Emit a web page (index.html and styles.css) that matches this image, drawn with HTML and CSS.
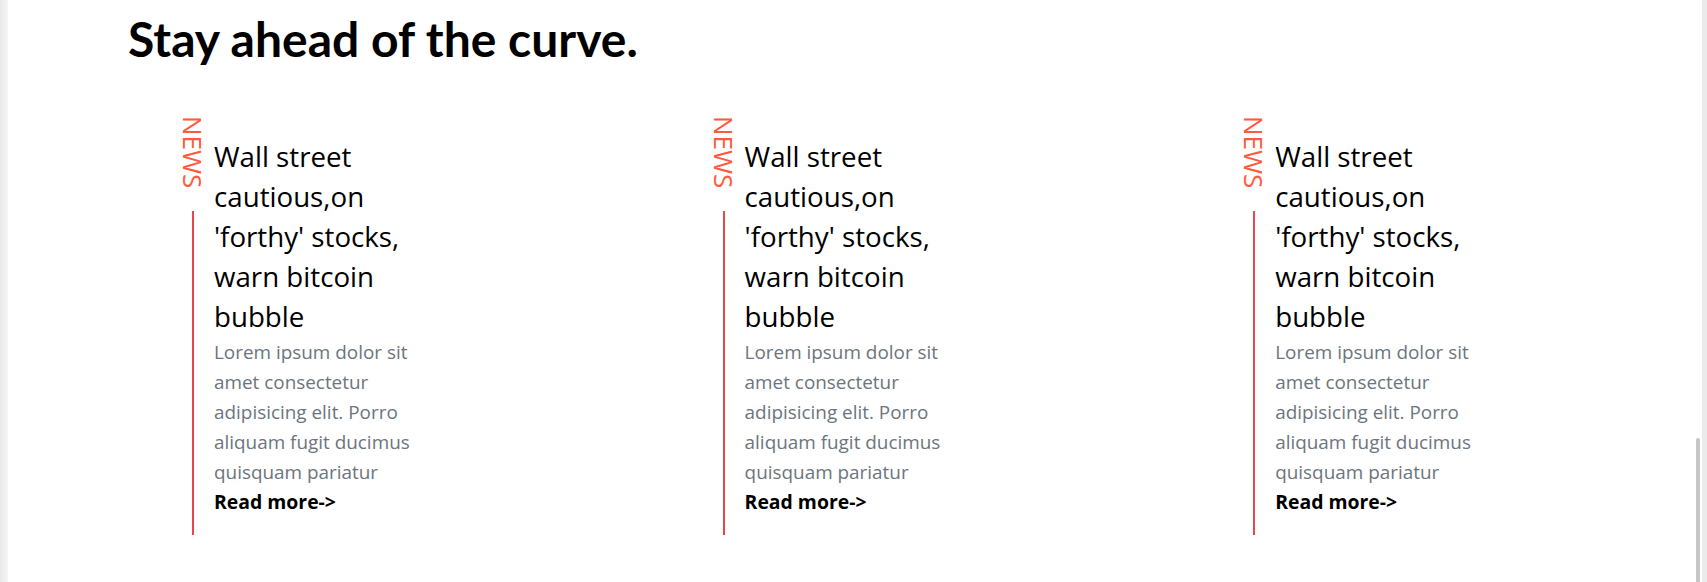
FILE: index.html
```html
<!DOCTYPE html>
<html lang="en">
<head>
<meta charset="utf-8">
<title>Stay ahead of the curve.</title>
<link rel="stylesheet" href="styles.css">
</head>
<body>
<div class="frame-left"></div>
<div class="frame-right"></div>
<div class="scroll-thumb"></div>

<section class="news-section">
  <h2 class="section-title">Stay ahead of the curve.</h2>
  <div class="cards">
    <article class="card">
      <div class="card-side">
        <span class="tag">NEWS</span>
        <span class="rule"></span>
      </div>
      <div class="card-body">
        <h3 class="card-title">Wall street cautious,on 'forthy' stocks, warn bitcoin bubble</h3>
        <p class="card-text">Lorem ipsum dolor sit amet consectetur adipisicing elit. Porro aliquam fugit ducimus quisquam pariatur</p>
        <a class="read-more" href="#">Read more-&gt;</a>
      </div>
    </article>
    <article class="card">
      <div class="card-side">
        <span class="tag">NEWS</span>
        <span class="rule"></span>
      </div>
      <div class="card-body">
        <h3 class="card-title">Wall street cautious,on 'forthy' stocks, warn bitcoin bubble</h3>
        <p class="card-text">Lorem ipsum dolor sit amet consectetur adipisicing elit. Porro aliquam fugit ducimus quisquam pariatur</p>
        <a class="read-more" href="#">Read more-&gt;</a>
      </div>
    </article>
    <article class="card">
      <div class="card-side">
        <span class="tag">NEWS</span>
        <span class="rule"></span>
      </div>
      <div class="card-body">
        <h3 class="card-title">Wall street cautious,on 'forthy' stocks, warn bitcoin bubble</h3>
        <p class="card-text">Lorem ipsum dolor sit amet consectetur adipisicing elit. Porro aliquam fugit ducimus quisquam pariatur</p>
        <a class="read-more" href="#">Read more-&gt;</a>
      </div>
    </article>
  </div>
</section>
</body>
</html>
```
FILE: styles.css
```css
* { box-sizing: border-box; }

html, body {
  margin: 0;
  padding: 0;
  background: #ffffff;
}

body {
  font-family: "Open Sans", "Noto Sans", sans-serif;
  color: #000;
  overflow: hidden;
}

/* window chrome overlays */
.frame-left {
  position: fixed;
  left: 0;
  top: 0;
  bottom: 0;
  width: 8px;
  background: linear-gradient(to right, #e9e9e9, #f6f6f6);
}
.frame-right {
  position: fixed;
  right: 0;
  top: 0;
  bottom: 0;
  width: 5px;
  background: #ebebeb;
}
.scroll-thumb {
  position: fixed;
  left: 1696px;
  top: 438px;
  width: 4px;
  height: 150px;
  background: #c6c6c6;
  border-radius: 2px 2px 0 0;
}

.news-section {
  padding: 10px 0 0 128px;
}

.section-title {
  margin: 0;
  font-family: "Lato", "Open Sans", sans-serif;
  font-weight: 700;
  font-size: 48px;
  line-height: 58px;
  color: #000;
}

.cards {
  display: grid;
  grid-template-columns: repeat(3, 530.6px);
  margin: 48px 0 0 55px;
}

.card {
  display: flex;
  gap: 11px;
}

.card-side {
  width: 20px;
  display: flex;
  flex-direction: column;
  align-items: center;
}

.tag {
  writing-mode: vertical-rl;
  font-size: 26px;
  font-weight: 500;
  line-height: 20px;
  color: #ff5a3d;
  letter-spacing: 0;
}

.rule {
  flex: 1;
  width: 2px;
  margin-top: 23px;
  background: #e8464c;
}

.card-body {
  width: 215px;
  padding-top: 20px;
  padding-bottom: 18px;
}

.card-title {
  margin: 0 0 1px;
  font-weight: 400;
  font-size: 27.7px;
  line-height: 40px;
  color: #000;
}

.card-text {
  margin: 0;
  font-size: 18.9px;
  line-height: 30px;
  color: #6c757d;
}

.read-more {
  display: block;
  font-size: 19.4px;
  line-height: 30px;
  font-weight: 700;
  color: #000;
  text-decoration: none;
}
```
